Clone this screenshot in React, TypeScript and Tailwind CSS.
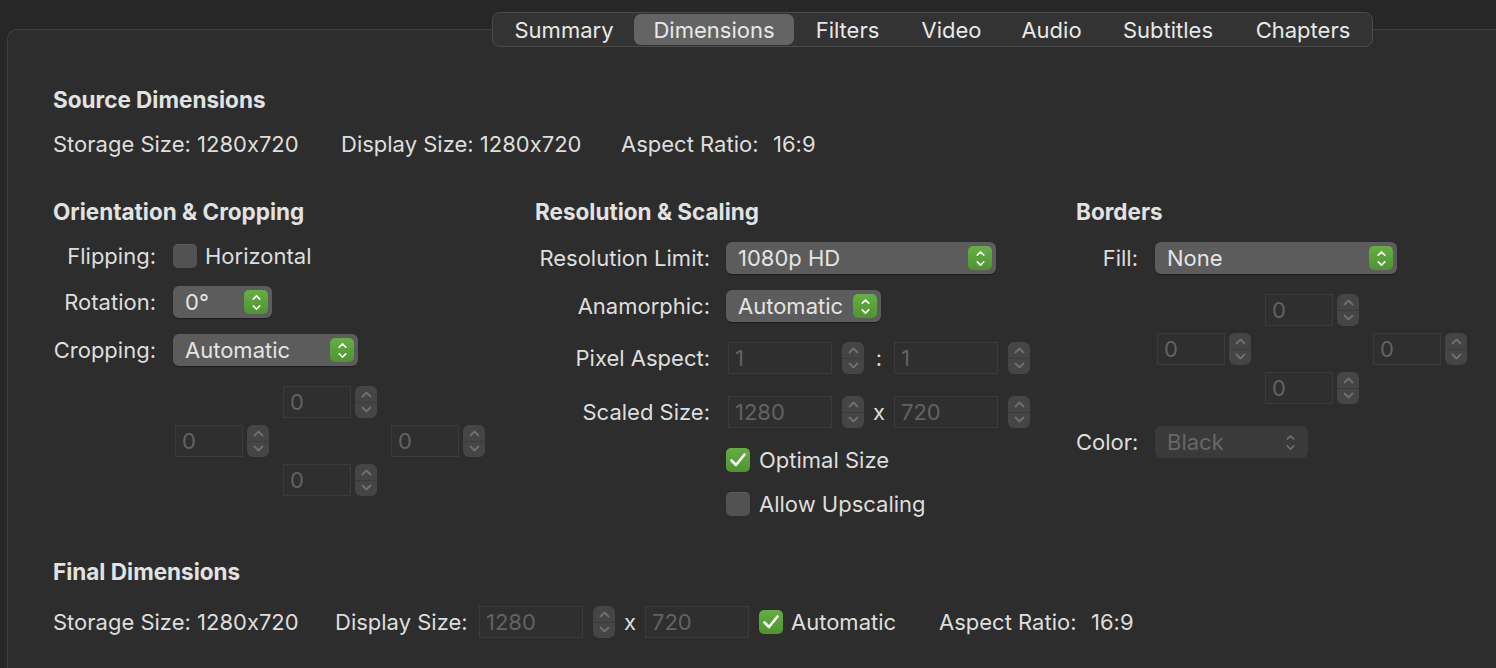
import React from "react";

const tabs = [
  { label: "Summary", w: "w-[140px]" },
  { label: "Dimensions", w: "w-[160px]" },
  { label: "Filters", w: "w-[107px]" },
  { label: "Video", w: "w-[101px]" },
  { label: "Audio", w: "w-[99px]" },
  { label: "Subtitles", w: "w-[134px]" },
  { label: "Chapters", w: "w-[136px]" },
];

const Chevron = ({ up, color, w = 11 }: { up?: boolean; color: string; w?: number }) => (
  <svg width={w} height="7" viewBox="0 0 11 7" fill="none">
    <path
      d={up ? "M1.5 5.5 L5.5 1.5 L9.5 5.5" : "M1.5 1.5 L5.5 5.5 L9.5 1.5"}
      stroke={color}
      strokeWidth="1.8"
      strokeLinecap="round"
      strokeLinejoin="round"
    />
  </svg>
);

const Stepper = () => (
  <div className="flex h-[32px] w-[22px] flex-col overflow-hidden rounded-[6px] bg-[#454545]">
    <div className="flex flex-1 items-center justify-center border-b border-[#3b3b3b] pt-[2px]">
      <Chevron up color="#707070" />
    </div>
    <div className="flex flex-1 items-center justify-center pb-[2px]">
      <Chevron color="#707070" />
    </div>
  </div>
);

const Field = ({ value, w }: { value: string; w: string }) => (
  <div
    className={`flex h-[32px] ${w} items-center border border-[#3b3b3b] bg-[#2f2f2f] pl-[6px] text-[#626262]`}
  >
    {value}
  </div>
);

const NumUnit = ({ value = "0" }: { value?: string }) => (
  <div className="flex items-center gap-[4px]">
    <Field value={value} w="w-[68px]" />
    <Stepper />
  </div>
);

const Popup = ({ value, w, disabled }: { value: string; w: string; disabled?: boolean }) => (
  <div
    className={`flex h-[32px] ${w} items-center justify-between rounded-[6px] pl-[12px] pr-[4px] ${
      disabled ? "bg-[#3a3a3a] text-[#676767]" : "bg-[#5c5c5c] text-[#e4e4e4] shadow-[0_1px_1px_rgba(0,0,0,0.35)]"
    }`}
  >
    <span>{value}</span>
    {disabled ? (
      <div className="flex w-[24px] flex-col items-center gap-[3px] pr-[4px]">
        <Chevron up color="#6e6e6e" w={9} />
        <Chevron color="#6e6e6e" w={9} />
      </div>
    ) : (
      <div className="flex h-[24px] w-[24px] flex-col items-center justify-center gap-[3px] rounded-[5px] bg-gradient-to-b from-[#66ae45] to-[#4f9431]">
        <Chevron up color="#ffffff" w={9} />
        <Chevron color="#ffffff" w={9} />
      </div>
    )}
  </div>
);

const Checkbox = ({ checked }: { checked?: boolean }) =>
  checked ? (
    <div className="flex h-[24px] w-[24px] items-center justify-center rounded-[5px] bg-gradient-to-b from-[#65ad44] to-[#4f9431]">
      <svg width="18" height="16" viewBox="0 0 18 16" fill="none">
        <path
          d="M2.5 8.5 L7 13 L15.5 2.5"
          stroke="#ffffff"
          strokeWidth="2.6"
          strokeLinecap="round"
          strokeLinejoin="round"
        />
      </svg>
    </div>
  ) : (
    <div className="h-[24px] w-[24px] rounded-[5px] bg-[#525252] shadow-[inset_0_1px_0_rgba(255,255,255,0.06)]" />
  );

const OffsetGrid = () => (
  <div className="grid grid-cols-[94px_94px_94px] grid-rows-[32px_32px_32px] gap-x-[14px] gap-y-[7px]">
    <div className="col-start-2 row-start-1">
      <NumUnit />
    </div>
    <div className="col-start-1 row-start-2">
      <NumUnit />
    </div>
    <div className="col-start-3 row-start-2">
      <NumUnit />
    </div>
    <div className="col-start-2 row-start-3">
      <NumUnit />
    </div>
  </div>
);

const Heading = ({ children }: { children: React.ReactNode }) => (
  <h2 className="h-[26px] text-[22.5px] font-bold leading-[26px] text-[#e2e2e2]">{children}</h2>
);

export default function App() {
  return (
    <div className="h-[668px] w-[1496px] overflow-hidden bg-[#272727] pt-[12px] font-['Inter',sans-serif] text-[22px] leading-[26px] text-[#dedede] [font-feature-settings:'calt'_0]">
      {/* tab strip sits over the panel's top edge */}
      <div className="relative z-10 ml-[492px] flex h-[35px] w-[881px] items-center rounded-[8px] border border-[#4a4a4a] bg-[#333333] px-[1px]">
        {tabs.map((t, i) => (
          <React.Fragment key={t.label}>
            {i > 2 && <div className="h-[20px] w-px bg-[#424242]" />}
            <div
              className={`flex h-[31px] ${t.w} shrink-0 items-center justify-center rounded-[7px] ${
                t.label === "Dimensions" ? "bg-[#646464]" : ""
              } text-[#e8e8e8]`}
            >
              {t.label}
            </div>
          </React.Fragment>
        ))}
      </div>

      <div className="-mt-[18px] ml-[7px] h-[700px] rounded-tl-[10px] border-l border-t border-[#3e3e3e] bg-[#2d2d2d] pl-[45px] pt-[57px]">
        <Heading>Source Dimensions</Heading>
        <div className="mt-[18px] flex h-[26px] items-center">
          <span className="w-[288px]">Storage Size: 1280x720</span>
          <span className="w-[280px]">Display Size: 1280x720</span>
          <span className="w-[152px]">Aspect Ratio:</span>
          <span>16:9</span>
        </div>

        <div className="mt-[42px] flex">
          {/* Orientation & Cropping */}
          <div className="flex w-[482px] flex-col">
            <Heading>Orientation &amp; Cropping</Heading>
            <div className="mt-[15px] flex h-[32px] items-center gap-[17px]">
              <span className="w-[103px] text-right">Flipping:</span>
              <Checkbox />
              <span className="-ml-[9px]">Horizontal</span>
            </div>
            <div className="mt-[14px] flex h-[32px] items-center gap-[17px]">
              <span className="w-[103px] text-right">Rotation:</span>
              <Popup value="0°" w="w-[99px]" />
            </div>
            <div className="mt-[16px] flex h-[32px] items-center gap-[17px]">
              <span className="w-[103px] text-right">Cropping:</span>
              <Popup value="Automatic" w="w-[185px]" />
            </div>
            <div className="ml-[122px] mt-[20px]">
              <OffsetGrid />
            </div>
          </div>

          {/* Resolution & Scaling */}
          <div className="flex w-[541px] flex-col">
            <Heading>Resolution &amp; Scaling</Heading>
            <div className="mt-[17px] flex h-[32px] items-center gap-[16px]">
              <span className="w-[175px] text-right">Resolution Limit:</span>
              <Popup value="1080p HD" w="w-[270px]" />
            </div>
            <div className="mt-[16px] flex h-[32px] items-center gap-[16px]">
              <span className="w-[175px] text-right">Anamorphic:</span>
              <Popup value="Automatic" w="w-[155px]" />
            </div>
            <div className="mt-[20px] flex h-[32px] items-center">
              <span className="mr-[18px] w-[175px] text-right">Pixel Aspect:</span>
              <Field value="1" w="w-[104px]" />
              <div className="ml-[10px]">
                <Stepper />
              </div>
              <span className="w-[30px] text-center">:</span>
              <Field value="1" w="w-[104px]" />
              <div className="ml-[10px]">
                <Stepper />
              </div>
            </div>
            <div className="mt-[22px] flex h-[32px] items-center">
              <span className="mr-[18px] w-[175px] text-right">Scaled Size:</span>
              <Field value="1280" w="w-[104px]" />
              <div className="ml-[10px]">
                <Stepper />
              </div>
              <span className="w-[30px] text-center">x</span>
              <Field value="720" w="w-[104px]" />
              <div className="ml-[10px]">
                <Stepper />
              </div>
            </div>
            <div className="ml-[191px] mt-[16px] flex h-[32px] items-center gap-[9px]">
              <Checkbox checked />
              <span>Optimal Size</span>
            </div>
            <div className="ml-[191px] mt-[12px] flex h-[32px] items-center gap-[9px]">
              <Checkbox />
              <span>Allow Upscaling</span>
            </div>
          </div>

          {/* Borders */}
          <div className="flex flex-col">
            <Heading>Borders</Heading>
            <div className="mt-[17px] flex h-[32px] items-center gap-[17px]">
              <span className="w-[62px] text-right">Fill:</span>
              <Popup value="None" w="w-[242px]" />
            </div>
            <div className="ml-[81px] mt-[20px]">
              <OffsetGrid />
            </div>
            <div className="mt-[22px] flex h-[32px] items-center gap-[17px]">
              <span className="w-[62px] text-right">Color:</span>
              <Popup value="Black" w="w-[153px]" disabled />
            </div>
          </div>
        </div>

        <div className="mt-[39px]">
          <Heading>Final Dimensions</Heading>
        </div>
        <div className="mt-[21px] flex h-[32px] items-center">
          <span className="w-[282px]">Storage Size: 1280x720</span>
          <span className="w-[144px]">Display Size:</span>
          <Field value="1280" w="w-[104px]" />
          <div className="ml-[10px]">
            <Stepper />
          </div>
          <span className="w-[30px] text-center">x</span>
          <Field value="720" w="w-[104px]" />
          <div className="ml-[10px]">
            <Checkbox checked />
          </div>
          <span className="ml-[8px] w-[148px]">Automatic</span>
          <span className="w-[152px]">Aspect Ratio:</span>
          <span>16:9</span>
        </div>
      </div>
    </div>
  );
}
